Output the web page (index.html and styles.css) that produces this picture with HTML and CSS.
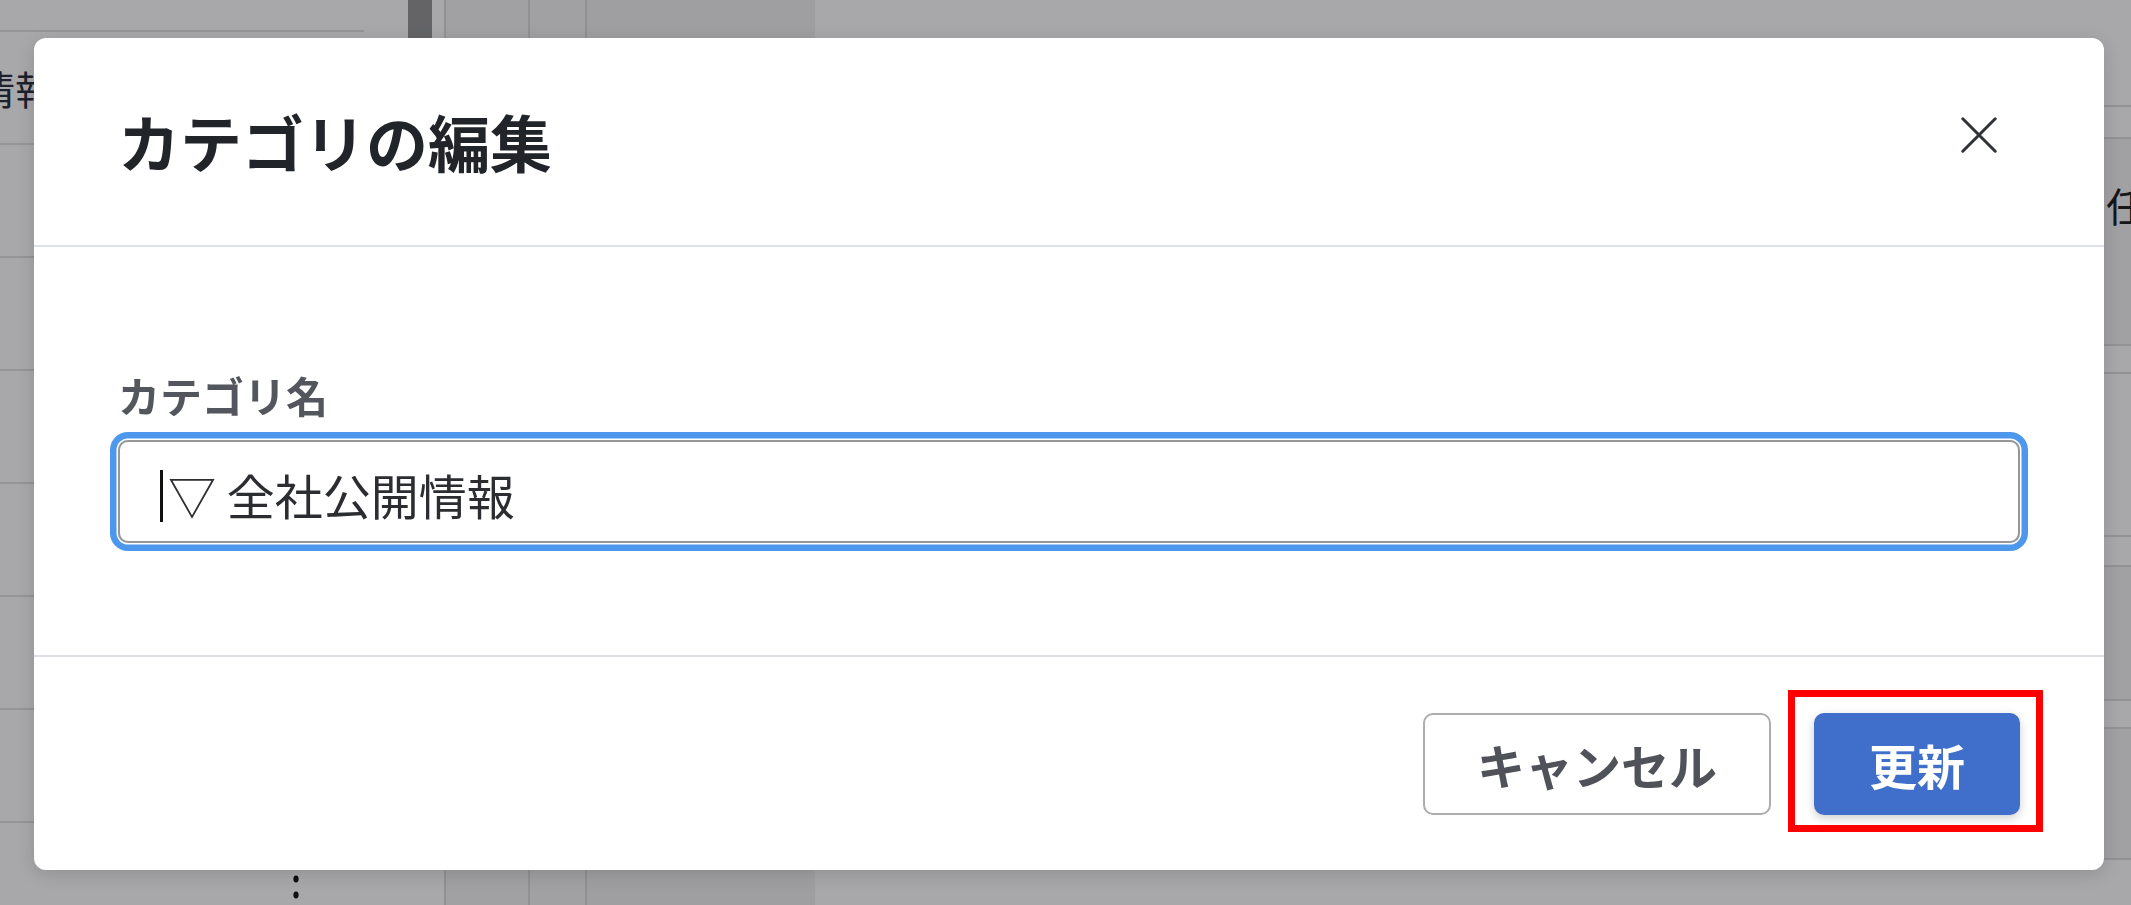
FILE: index.html
```html
<!DOCTYPE html>
<html lang="ja">
<head>
<meta charset="utf-8">
<title>カテゴリの編集</title>
<link rel="stylesheet" href="styles.css">
</head>
<body>
<div class="page">
  <aside class="side">
    <div class="side-head"></div>
    <div class="side-row"><span class="side-label">全社公開情報</span><svg class="kebab" viewBox="0 0 8 40"><ellipse cx="4" cy="4" rx="2.6" ry="3.4"/><ellipse cx="4" cy="20" rx="2.6" ry="3.4"/><ellipse cx="4" cy="36" rx="2.6" ry="3.4"/></svg></div>
    <div class="side-row"><svg class="kebab" viewBox="0 0 8 40"><ellipse cx="4" cy="4" rx="2.6" ry="3.4"/><ellipse cx="4" cy="20" rx="2.6" ry="3.4"/><ellipse cx="4" cy="36" rx="2.6" ry="3.4"/></svg></div>
    <div class="side-row"><svg class="kebab" viewBox="0 0 8 40"><ellipse cx="4" cy="4" rx="2.6" ry="3.4"/><ellipse cx="4" cy="20" rx="2.6" ry="3.4"/><ellipse cx="4" cy="36" rx="2.6" ry="3.4"/></svg></div>
    <div class="side-row"><svg class="kebab" viewBox="0 0 8 40"><ellipse cx="4" cy="4" rx="2.6" ry="3.4"/><ellipse cx="4" cy="20" rx="2.6" ry="3.4"/><ellipse cx="4" cy="36" rx="2.6" ry="3.4"/></svg></div>
    <div class="side-row"><svg class="kebab" viewBox="0 0 8 40"><ellipse cx="4" cy="4" rx="2.6" ry="3.4"/><ellipse cx="4" cy="20" rx="2.6" ry="3.4"/><ellipse cx="4" cy="36" rx="2.6" ry="3.4"/></svg></div>
    <div class="side-row"><svg class="kebab" viewBox="0 0 8 40"><ellipse cx="4" cy="4" rx="2.6" ry="3.4"/><ellipse cx="4" cy="20" rx="2.6" ry="3.4"/><ellipse cx="4" cy="36" rx="2.6" ry="3.4"/></svg></div>
    <div class="side-row"><svg class="kebab" viewBox="0 0 8 40"><ellipse cx="4" cy="4" rx="2.6" ry="3.4"/><ellipse cx="4" cy="20" rx="2.6" ry="3.4"/><ellipse cx="4" cy="36" rx="2.6" ry="3.4"/></svg></div>
    <div class="side-row"><svg class="kebab" viewBox="0 0 8 40"><ellipse cx="4" cy="4" rx="2.6" ry="3.4"/><ellipse cx="4" cy="20" rx="2.6" ry="3.4"/><ellipse cx="4" cy="36" rx="2.6" ry="3.4"/></svg></div>
  </aside>
  <div class="rail"><div class="rail-thumb"></div></div>
  <div class="col col-narrow"></div>
  <div class="col col-a"></div>
  <div class="col col-b"></div>
  <div class="col col-fill"></div>
  <div class="list">
    <div class="list-row h107"></div>
    <div class="list-row h30"></div>
    <div class="list-row h205 shade"><span class="cell-end">任意</span></div>
    <div class="list-row h26"></div>
    <div class="list-row h161"></div>
    <div class="list-row h28"></div>
    <div class="list-row h132 shade"></div>
    <div class="list-row h26"></div>
    <div class="list-row h129 shade"></div>
    <div class="list-row"></div>
  </div>
</div>

<div class="backdrop">
  <div class="modal" role="dialog" aria-labelledby="modal-title">
    <header class="modal-header">
      <h1 class="modal-title" id="modal-title">カテゴリの編集</h1>
      <button class="modal-close" aria-label="閉じる">
        <svg viewBox="0 0 36 36" width="36" height="36"><path d="M1.8 1.8 L34.2 34.2 M34.2 1.8 L1.8 34.2"/></svg>
      </button>
    </header>
    <div class="modal-body">
      <label class="field-label">カテゴリ名</label>
      <div class="field-input"><span class="caret"></span><span class="field-value">▽ 全社公開情報</span></div>
    </div>
    <footer class="modal-footer">
      <button class="btn btn-cancel">キャンセル</button>
      <span class="highlight"><button class="btn btn-primary">更新</button></span>
    </footer>
  </div>
</div>
</body>
</html>
```

FILE: styles.css
```css
html, body {
  margin: 0;
  height: 100%;
  overflow: hidden;
}

body {
  font-family: "Noto Sans CJK JP", "Noto Sans", "Liberation Sans", sans-serif;
  background: #ffffff;
  color: #333333;
}

/* ---------- underlying page ---------- */
.page {
  display: flex;
  height: 100vh;
  background: #ffffff;
}

.side {
  width: 364px;
  flex: none;
}

.side-head {
  height: 30px;
  border-bottom: 2px solid #e2e2e2;
}

.side-row {
  height: 111px;
  border-bottom: 2px solid #e2e2e2;
  display: flex;
  align-items: center;
  padding-right: 64px;
}

.side-label {
  margin-left: -185px;
  font-size: 40px;
  line-height: 1.2;
  color: #2a3140;
  white-space: nowrap;
}

.kebab {
  margin-left: auto;
  width: 8px;
  height: 40px;
  fill: #151515;
}

.rail {
  width: 68px;
  flex: none;
}

.rail-thumb {
  margin-left: 44px;
  width: 24px;
  height: 220px;
  background: #979899;
}

.col {
  flex: none;
  border-right: 2px solid #dcdcdc;
}

.col-narrow {
  width: 12px;
}

.col-a {
  width: 82px;
  background: #f4f4f4;
}

.col-b {
  width: 55px;
  background: #f4f4f4;
}

.col-fill {
  width: 228px;
  background: #f2f2f3;
  border-right: 0;
}

.list {
  flex: 1;
  display: flex;
  flex-direction: column;
}

.list-row {
  border-bottom: 2px solid #dedede;
  display: flex;
  justify-content: flex-end;
  align-items: flex-start;
}

.list-row:last-child {
  flex: 1;
  border-bottom: 0;
}

.list-row.shade {
  background: #f5f5f6;
}

.h107 { height: 105px; }
.h30 { height: 30px; }
.h205 { height: 205px; }
.h26 { height: 26px; }
.h161 { height: 161px; }
.h28 { height: 28px; }
.h132 { height: 132px; }
.h129 { height: 129px; }

.cell-end {
  width: 25px;
  overflow: hidden;
  white-space: nowrap;
  padding-top: 42px;
  font-size: 40px;
  line-height: 1.2;
  color: #222222;
}

/* ---------- modal ---------- */
.backdrop {
  position: fixed;
  inset: 0;
  background: rgba(2, 4, 8, 0.345);
  display: flex;
  align-items: flex-start;
  padding: 38px 27px 0 34px;
}

.modal {
  flex: 1;
  background: #ffffff;
  border-radius: 12px;
  box-shadow: 0 4px 18px rgba(0, 0, 0, 0.14);
}

.modal-header {
  display: flex;
  align-items: center;
  justify-content: space-between;
  height: 207px;
  padding: 0 107px 0 84px;
  border-bottom: 2px solid #dee2e6;
}

.modal-title {
  margin: 0;
  font-size: 62px;
  font-weight: 700;
  line-height: 1.2;
  color: #212529;
}

.modal-close {
  width: 36px;
  height: 36px;
  padding: 0;
  border: 0;
  background: none;
  margin-bottom: 13px;
  display: flex;
}

.modal-close svg {
  stroke: #2f3237;
  stroke-width: 3;
  stroke-linecap: round;
  fill: none;
}

.modal-body {
  padding: 116px 84px 112px;
}

.field-label {
  display: block;
  font-size: 42px;
  font-weight: 700;
  line-height: 63px;
  color: #53565c;
  margin-bottom: 14px;
}

.field-input {
  height: 103px;
  box-sizing: border-box;
  border: 2px solid #979797;
  border-radius: 10px;
  box-shadow: 0 0 0 1.5px #ffffff, 0 0 0 8px #4d97ec;
  padding: 4px 40px 0;
  display: flex;
  align-items: center;
  font-size: 48px;
  color: #2b2d31;
}

.caret {
  width: 3px;
  height: 52px;
  background: #111111;
  margin: 4px 5px 0 0;
}

.field-value {
  white-space: pre;
}

.modal-footer {
  display: flex;
  justify-content: flex-end;
  align-items: center;
  gap: 43px;
  height: 213px;
  padding: 0 84px;
  border-top: 2px solid #dee2e6;
}

.btn {
  display: inline-flex;
  align-items: center;
  justify-content: center;
  height: 102px;
  box-sizing: border-box;
  border-radius: 10px;
  font-family: inherit;
  font-size: 48px;
  font-weight: 700;
  line-height: 1;
}

.btn-cancel {
  background: #ffffff;
  border: 2px solid #adadad;
  color: #4f5258;
  padding: 0 52px;
}

.btn-primary {
  background: #3f6ecb;
  border: 0;
  color: #ffffff;
  padding: 0 55px;
  box-shadow: 0 3px 10px rgba(0, 0, 0, 0.2);
}

.highlight {
  position: relative;
  display: flex;
}

.highlight::after {
  content: "";
  position: absolute;
  top: -23px;
  left: -26px;
  right: -23px;
  bottom: -17px;
  border: 7px solid #ff0000;
  pointer-events: none;
}
```
